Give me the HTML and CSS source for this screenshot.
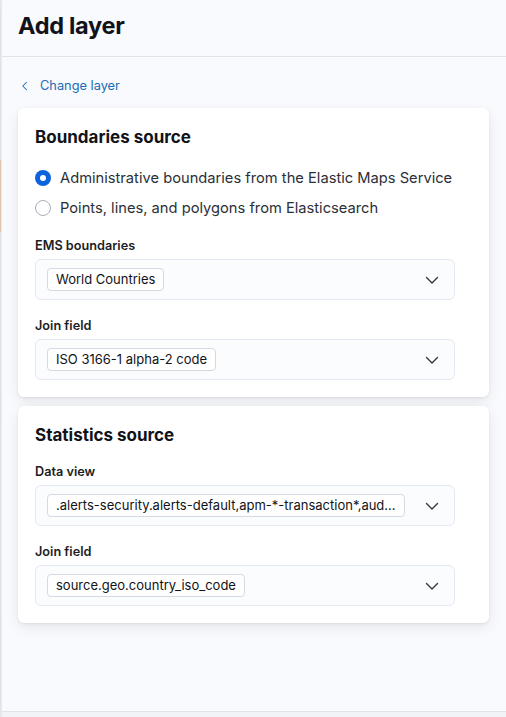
FILE: index.html
```html
<!DOCTYPE html>
<html lang="en">
<head>
<meta charset="utf-8">
<title>Add layer</title>
<link rel="stylesheet" href="styles.css">
</head>
<body>
<div class="flyout">
  <header class="flyout-header">
    <h1 class="flyout-title">Add layer</h1>
  </header>
  <main class="flyout-body">
    <a class="back-link" href="#">
      <svg class="back-icon" viewBox="0 0 16 16" width="12" height="12"><path d="M10 3 L5 8 L10 13" fill="none" stroke="currentColor" stroke-width="1.4" stroke-linecap="round" stroke-linejoin="round"/></svg>
      <span>Change layer</span>
    </a>

    <section class="card">
      <h2 class="card-title">Boundaries source</h2>
      <div class="radio-group">
        <label class="radio-row">
          <span class="radio radio-on"></span>
          <span class="radio-text">Administrative boundaries from the Elastic Maps Service</span>
        </label>
        <label class="radio-row">
          <span class="radio"></span>
          <span class="radio-text">Points, lines, and polygons from Elasticsearch</span>
        </label>
      </div>
      <div class="form-row">
        <div class="form-label">EMS boundaries</div>
        <div class="combo">
          <span class="pill">World Countries</span>
          <svg class="chevron" viewBox="0 0 16 16" width="16" height="16"><path d="M2.5 5.5 L8 11 L13.5 5.5" fill="none" stroke="currentColor" stroke-width="1.4" stroke-linecap="round" stroke-linejoin="round"/></svg>
        </div>
      </div>
      <div class="form-row">
        <div class="form-label">Join field</div>
        <div class="combo">
          <span class="pill">ISO 3166-1 alpha-2 code</span>
          <svg class="chevron" viewBox="0 0 16 16" width="16" height="16"><path d="M2.5 5.5 L8 11 L13.5 5.5" fill="none" stroke="currentColor" stroke-width="1.4" stroke-linecap="round" stroke-linejoin="round"/></svg>
        </div>
      </div>
    </section>

    <section class="card">
      <h2 class="card-title">Statistics source</h2>
      <div class="form-row first">
        <div class="form-label">Data view</div>
        <div class="combo">
          <span class="pill pill-wide">.alerts-security.alerts-default,apm-*-transaction*,aud...</span>
          <svg class="chevron" viewBox="0 0 16 16" width="16" height="16"><path d="M2.5 5.5 L8 11 L13.5 5.5" fill="none" stroke="currentColor" stroke-width="1.4" stroke-linecap="round" stroke-linejoin="round"/></svg>
        </div>
      </div>
      <div class="form-row">
        <div class="form-label">Join field</div>
        <div class="combo">
          <span class="pill">source.geo.country_iso_code</span>
          <svg class="chevron" viewBox="0 0 16 16" width="16" height="16"><path d="M2.5 5.5 L8 11 L13.5 5.5" fill="none" stroke="currentColor" stroke-width="1.4" stroke-linecap="round" stroke-linejoin="round"/></svg>
        </div>
      </div>
    </section>
  </main>
  <footer class="flyout-footer"></footer>
</div>
</body>
</html>
```

FILE: styles.css
```css
* { box-sizing: border-box; }
html, body {
  margin: 0;
  padding: 0;
  height: 100%;
}
body {
  background: linear-gradient(to bottom, #eceef1 0, #eceef1 160px, #e6cdb6 160px, #e6cdb6 232px, #eceef1 232px);
  font-family: Inter, "Noto Sans", "Liberation Sans", sans-serif;
  color: #1d1e24;
  overflow: hidden;
}
.flyout {
  margin-left: 1px;
  height: 717px;
  background: #f8fafd;
  border-left: 1px solid #e6e9ef;
  box-shadow: -4px 0 10px rgba(0,0,0,0.06);
  display: flex;
  flex-direction: column;
}
.flyout-header {
  height: 57px;
  border-bottom: 1px solid #dfe3ea;
  padding: 0 16px;
  display: flex;
  align-items: center;
}
.flyout-title {
  margin: 0;
  font-size: 23.5px;
  font-weight: 700;
  line-height: 30px;
  color: #111318;
  letter-spacing: -0.3px;
  position: relative;
  top: -2px;
}
.flyout-body {
  flex: 1;
  padding: 19px 16px 0 16px;
  display: flex;
  flex-direction: column;
  gap: 9px;
}
.back-link {
  display: flex;
  align-items: center;
  gap: 9px;
  color: #1a6bb5;
  text-decoration: none;
  font-size: 12.8px;
  line-height: 20px;
  padding-left: 1px;
  margin-bottom: 3px;
}
.back-icon { flex: none; }
.card {
  width: 471px;
  background: #ffffff;
  border-radius: 6px;
  box-shadow: 0 1px 3px rgba(0,0,0,0.07), 0 5px 14px rgba(0,0,0,0.08);
  padding: 16px 17px 17px 17px;
}
.card-title {
  margin: 0;
  font-size: 17px;
  font-weight: 700;
  line-height: 26px;
  color: #111318;
}
.radio-group {
  margin-top: 16px;
  display: flex;
  flex-direction: column;
  gap: 6px;
}
.radio-row {
  display: flex;
  align-items: center;
  gap: 9px;
  height: 24px;
}
.radio {
  width: 16px;
  height: 16px;
  border-radius: 50%;
  border: 1px solid #a7adb8;
  background: #fff;
  flex: none;
}
.radio-on {
  border: none;
  background: #0b64dd;
  position: relative;
}
.radio-on::after {
  content: "";
  position: absolute;
  left: 5px;
  top: 5px;
  width: 6px;
  height: 6px;
  border-radius: 50%;
  background: #fff;
}
.radio-text {
  font-size: 14.7px;
  color: #2b2f38;
  line-height: 24px;
}
.form-row { margin-top: 17px; }
.form-row.first { margin-top: 15px; }
.form-label {
  font-size: 12.7px;
  font-weight: 600;
  line-height: 18px;
  color: #1d1e24;
  margin-bottom: 4px;
}
.combo {
  width: 420px;
  height: 41px;
  border: 1px solid #e3e8f2;
  border-radius: 6px;
  background: #fbfcfd;
  display: flex;
  align-items: center;
  padding: 0 14px 0 11px;
}
.pill {
  height: 23px;
  border: 1px solid #d3dae6;
  border-radius: 4px;
  background: #ffffff;
  padding: 0 8px;
  font-size: 13px;
  line-height: 21px;
  color: #111318;
  white-space: nowrap;
}
.pill-wide { width: 358px; overflow: hidden; }
.chevron {
  margin-left: auto;
  color: #343741;
  flex: none;
}
.flyout-footer {
  height: 6px;
  border-top: 1px solid #dfe3ea;
  background: #f1f3f7;
}
```
